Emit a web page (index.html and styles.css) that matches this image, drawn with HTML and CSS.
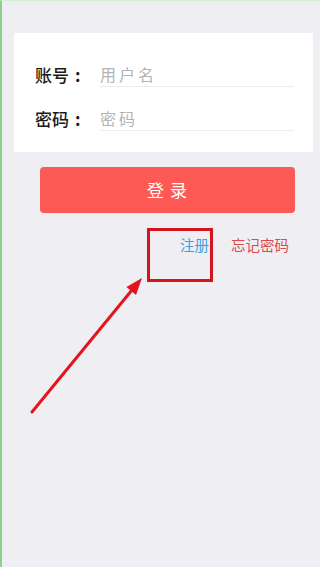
FILE: index.html
```html
<!DOCTYPE html>
<html lang="zh-CN">
<head>
<meta charset="utf-8">
<meta name="viewport" content="width=device-width, initial-scale=1">
<title>登录</title>
<link rel="stylesheet" href="styles.css">
</head>
<body>
<div class="page">
  <div class="card">
    <div class="row">
      <span class="label">账号<span class="colon">:</span></span>
      <span class="field">用户名</span>
    </div>
    <div class="row second">
      <span class="label">密码<span class="colon">:</span></span>
      <span class="field">密码</span>
    </div>
  </div>
  <div class="btn">登 录</div>
  <div class="links">
    <span class="reg">注册</span>
    <span class="forgot">忘记密码</span>
  </div>
  <svg class="annot" width="320" height="567" viewBox="0 0 320 567">
    <rect x="148.5" y="229.5" width="63" height="51" fill="none" stroke="#d3141c" stroke-width="3"/>
    <line x1="32" y1="412" x2="132" y2="290" stroke="#e5141c" stroke-width="3" stroke-linecap="round"/>
    <polygon points="142,278 126.4,287.1 136,295" fill="#e5141c"/>
  </svg>
</div>
</body>
</html>
```
FILE: styles.css
```css
html, body {
  margin: 0;
  padding: 0;
}
body {
  background: #efeef3;
  font-family: "Noto Sans CJK SC", "Noto Sans", sans-serif;
}
.page {
  position: relative;
  width: 318px;
  height: 566px;
  border-left: 2px solid #8fd08c;
  border-top: 1px solid #d3efd3;
  background: #efeef3;
  overflow: hidden;
}
.card {
  margin: 32px 7px 0 12px;
  background: #ffffff;
  padding: 31px 19px 21px 21px;
}
.row {
  display: flex;
  align-items: flex-start;
}
.row.second {
  margin-top: 21px;
}
.label {
  width: 65px;
  font-size: 17px;
  font-weight: 500;
  line-height: 22px;
  color: #1a1a1a;
}
.colon {
  margin-left: 6px;
  font-weight: 700;
}
.field {
  flex: 1;
  font-size: 16px;
  line-height: 20px;
  padding-bottom: 2px;
  letter-spacing: 3px;
  color: #b3b3b3;
  border-bottom: 1px solid #ececec;
}
.btn {
  margin: 15px 0 0 38px;
  width: 255px;
  height: 46px;
  border-radius: 4px;
  background: #fd5a56;
  color: #ffffff;
  font-size: 17px;
  line-height: 46px;
  text-align: center;
  letter-spacing: 1px;
}
.links {
  margin-top: 22px;
  display: flex;
  justify-content: flex-end;
  gap: 22px;
  padding-right: 31px;
  font-size: 14.5px;
  line-height: 20px;
}
.reg {
  color: #3a9ee0;
}
.forgot {
  color: #e0494b;
}
.annot {
  position: absolute;
  left: -2px;
  top: -1px;
}
```
